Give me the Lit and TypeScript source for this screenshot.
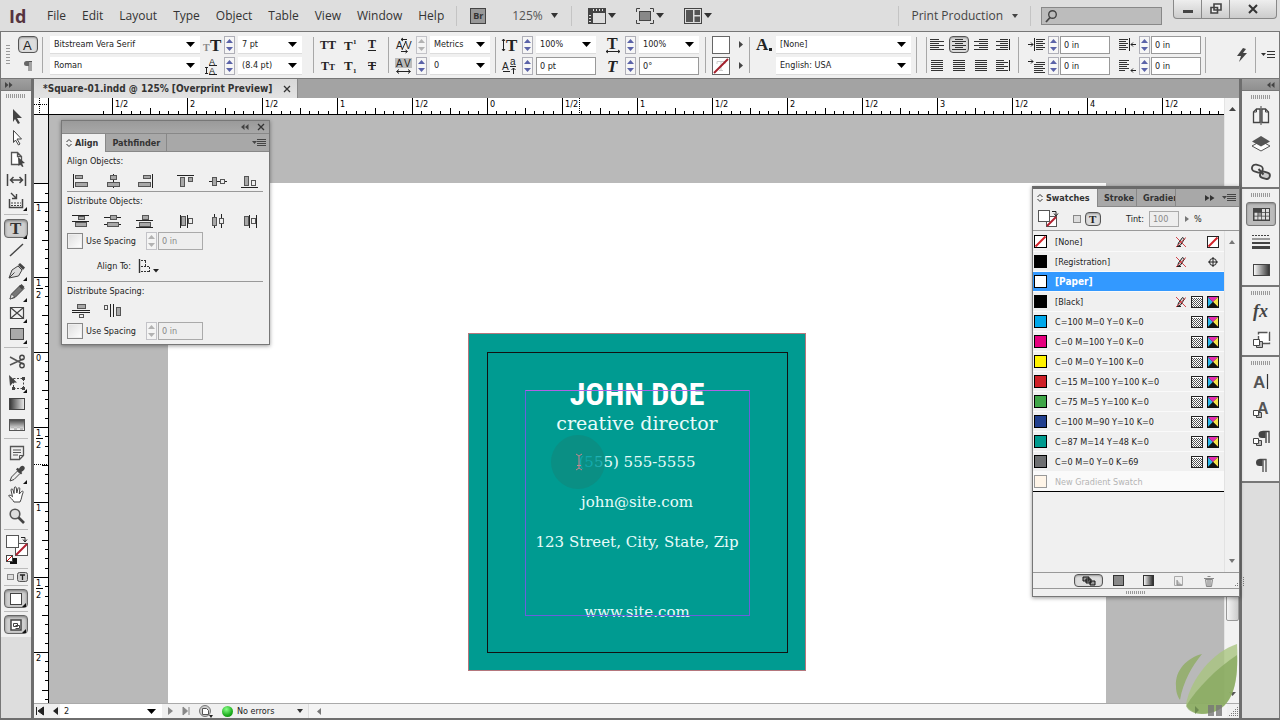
import { LitElement, html, svg, css, TemplateResult, SVGTemplateResult } from "lit";
import { customElement, state } from "lit/decorators.js";
import { classMap } from "lit/directives/class-map.js";
import { styleMap } from "lit/directives/style-map.js";

type Art = SVGTemplateResult | SVGTemplateResult[];

const icon = (w: number, h: number, art: Art): TemplateResult =>
  html`<svg width=${w} height=${h} viewBox="0 0 ${w} ${h}" aria-hidden="true">${art}</svg>`;

const lines = (rows: number[][], color = "#333"): SVGTemplateResult =>
  svg`${rows.map(([x, y, w]) => svg`<rect x=${x} y=${y} width=${w} height="1" fill=${color}/>`)}`;

const box = (x: number, y: number, w: number, h: number, light = false): SVGTemplateResult =>
  svg`<rect x=${x + 0.5} y=${y + 0.5} width=${w - 1} height=${h - 1} fill=${light ? "#eee" : "#a8a8a8"} stroke="#555"/>`;

const bar = (x: number, y: number, w: number, h: number): SVGTemplateResult =>
  svg`<rect x=${x} y=${y} width=${w} height=${h} fill="#222"/>`;

const glyph = (x: number, y: number, size: number, text: string, style = "", color = "#222"): SVGTemplateResult =>
  svg`<text x=${x} y=${y} font-size=${size} font-family="Liberation Serif, serif" font-weight="bold" fill=${color} font-style=${style || "normal"}>${text}</text>`;

const sans = (x: number, y: number, size: number, text: string, weight = "normal"): SVGTemplateResult =>
  svg`<text x=${x} y=${y} font-size=${size} font-family="Liberation Sans, sans-serif" font-weight=${weight} fill="#222">${text}</text>`;

const corner = svg`<path d="M21 21h-4l4-4z" fill="#111"/>`;

/* ---------- tool box ---------- */

const TOOLS: { name: string; art: Art; more?: boolean; on?: boolean }[][] = [
  [
    { name: "Selection Tool", art: svg`<path d="M7 3l9 9h-5l3 5-2 1-3-5-2 3z" fill="#444"/>` },
    { name: "Direct Selection Tool", art: svg`<path d="M7.500 3.500l8 8.500h-4.500l3 5-1.500 1-3-5-2 2.500z" fill="#fff" stroke="#444"/>` },
    { name: "Page Tool", art: svg`<path d="M5.500 4.500h6l4 4v8h-10z M11.500 4.500v4h4" fill="#fff" stroke="#555" stroke-width="1.300"/><path d="M12 9l7 6-3 .5 1.500 3-1.500.5-1.500-3-2 2z" fill="#444"/>` },
    { name: "Gap Tool", art: svg`<path d="M1.500 5v12M19.500 5v12M5 11h11M7.500 8L4.500 11l3 3M13.500 8l3 3-3 3" fill="none" stroke="#444" stroke-width="1.500"/>` },
    { name: "Content Collector Tool", more: true, art: svg`<path d="M3.500 9v8.500h13V9" fill="none" stroke="#444" stroke-width="1.500"/><path d="M5 13h10M5 15.500h10" stroke="#444" stroke-dasharray="2 1"/><path d="M5 3l5 5M10.500 4v4.500H6" fill="none" stroke="#444" stroke-width="1.400"/>` },
  ],
  [
    { name: "Type Tool", more: true, on: true, art: svg`<text x="4" y="16" font-size="17" font-family="Liberation Serif, serif" font-weight="bold" fill="#333">T</text>` },
    { name: "Line Tool", art: svg`<path d="M4 17L17 5" stroke="#444" stroke-width="1.400"/>` },
    { name: "Pen Tool", more: true, art: svg`<path d="M3 18l3-8 6-4 4 4-3.500 6z" fill="#ddd" stroke="#444"/><path d="M3 18l5.500-5.500" stroke="#444"/><path d="M12 5l2-2 5 4.500-2 2.500z" fill="#444"/>` },
    { name: "Pencil Tool", more: true, art: svg`<path d="M4 18l1.500-5 9-9 3.500 3.500-9 9z" fill="#777" stroke="#444"/><path d="M4 18l1.500-5 3 3z" fill="#eee" stroke="#444" stroke-width=".7"/><path d="M13 5.500l3 3L18.500 6l-3-3z" fill="#444"/>` },
    { name: "Rectangle Frame Tool", more: true, art: svg`<path d="M4.500 5.500h13v11h-13zM4.500 5.500l13 11M17.500 5.500l-13 11" fill="none" stroke="#444" stroke-width="1.200"/>` },
    { name: "Rectangle Tool", more: true, art: svg`<rect x="4.500" y="5.500" width="13" height="11" fill="#aaa" stroke="#444"/>` },
  ],
  [
    { name: "Scissors Tool", art: svg`<path d="M4 6l13 7M4 14l13-6" stroke="#555" stroke-width="1.500"/><circle cx="16" cy="6.500" r="2.200" fill="none" stroke="#444" stroke-width="1.400"/><circle cx="16" cy="14.500" r="2.200" fill="none" stroke="#444" stroke-width="1.400"/>` },
    { name: "Free Transform Tool", more: true, art: svg`<path d="M3 3l8 7.500-4 .2L4 14z" fill="#444"/><rect x="7.500" y="6.500" width="10" height="10" fill="none" stroke="#444" stroke-dasharray="2 1.500"/><path d="M16 5h3v3h-3zM16 15h3v3h-3zM6 15h3v3H6z" fill="#444"/>` },
    { name: "Gradient Swatch Tool", art: svg`<defs><linearGradient id="gh"><stop offset="0" stop-color="#333"/><stop offset="1" stop-color="#eee"/></linearGradient></defs><rect x="3.500" y="5.500" width="15" height="11" fill="url(#gh)" stroke="#444"/>` },
    { name: "Gradient Feather Tool", art: svg`<defs><linearGradient id="gv" x2="0" y2="1"><stop offset="0" stop-color="#444"/><stop offset="1" stop-color="#fff"/></linearGradient></defs><rect x="3.500" y="5.500" width="15" height="11" fill="url(#gv)" stroke="#555"/><path d="M5 12h3v2H5zM11 12h3v2h-3zM8 14h3v2H8zM14 14h3v2h-3z" fill="#bbb"/>` },
  ],
  [
    { name: "Note Tool", art: svg`<path d="M4.500 4.500h13v9l-4 4h-9z" fill="#eee" stroke="#555" stroke-width="1.300"/><path d="M17 13.500h-3.500V17M7 8h8M7 10.500h8M7 13h5" fill="none" stroke="#555"/>` },
    { name: "Eyedropper Tool", more: true, art: svg`<path d="M4 18l1.500-4 6-6 2.500 2.500-6 6z" fill="#eee" stroke="#444"/><path d="M10 6.500l5 5 1.300-1.500-1-1C19 7 19.500 5 18 3.500S14.500 3 13 5.800l-1.500-1z" fill="#444"/>` },
    { name: "Hand Tool", art: svg`<path d="M8 18c-1-2-4-5-5.500-6 .5-1.500 2.500-1 4 .8L5 6c0-1.400 1.700-1.500 2 0l1 3.500L8.300 4c.1-1.500 2-1.500 2 0l.5 5 1.200-4.500c.5-1.400 2-1 1.800.3L13.300 10l2.200-2.500c1-1 2.200 0 1.500 1.200C15.500 12 16 14 14 18z" fill="#fff" stroke="#444"/>` },
    { name: "Zoom Tool", art: svg`<circle cx="9" cy="9" r="4.800" fill="#ddd" stroke="#555" stroke-width="1.600"/><path d="M12.500 12.500l5.500 5.500" stroke="#444" stroke-width="2.600"/>` },
  ],
];

/* ---------- dock ---------- */

const DOCK: { name: string; art: Art; on?: boolean }[][] = [
  [
    { name: "Pages", art: svg`<path d="M3.500 7l3-3h3.500v13.500H3.500zM12 4h3.500l3 3v10.500H12z" fill="#f4f4f4" stroke="#444" stroke-width="1.300"/><path d="M11 1v19" stroke="#444"/><path d="M6.500 4v3h-3M15.500 4v3h3" fill="none" stroke="#444"/>` },
    { name: "Layers", art: svg`<path d="M2 13l9-5 9 5-9 5z" fill="#fff" stroke="#555"/><path d="M2 8.500l9-5.500 9 5.500-9 5z" fill="#555"/>` },
    { name: "Links", art: svg`<rect x="2" y="4" width="11" height="7" rx="3.500" fill="#eee" stroke="#444" stroke-width="1.800" transform="rotate(15 7 7)"/><rect x="10" y="11" width="10" height="6.500" rx="3.200" fill="#ccc" stroke="#444" stroke-width="1.800" transform="rotate(15 15 14)"/><path d="M8.500 8l5 5.500" stroke="#444" stroke-width="2"/>` },
  ],
  [
    { name: "Swatches", on: true, art: svg`<rect x="3" y="5" width="17" height="13" fill="#444"/><path d="M4.500 9.800h3v3h-3zM12 6h3v3h-3zM16 6h3v3h-3zM12 9.800h3v3h-3zM16 9.800h3v3h-3zM4.500 13.500h3v3h-3zM8.300 13.500h3v3h-3zM12 13.500h3v3h-3zM16 13.500h3v3h-3z" fill="#ddd"/><path d="M8.300 9.800h3v3h-3z" fill="#999"/>` },
    { name: "Stroke", art: svg`<path d="M2 4.500h18" stroke="#444" stroke-dasharray="2 1"/><path d="M2 8h18" stroke="#444"/><path d="M2 12h18" stroke="#444" stroke-width="2"/><path d="M2 16.500h18" stroke="#444" stroke-width="3"/>` },
    { name: "Gradient", art: svg`<defs><linearGradient id="dg"><stop offset="0" stop-color="#fff"/><stop offset="1" stop-color="#333"/></linearGradient></defs><rect x="3.500" y="5.500" width="16" height="11" fill="url(#dg)" stroke="#444"/>` },
  ],
  [
    { name: "Effects", art: svg`<text x="3" y="16" font-size="18" font-family="Liberation Serif, serif" font-style="italic" font-weight="bold" fill="#444">fx</text>` },
    { name: "Object Styles", art: svg`<path d="M8.500 3.500h11v11h-11z" fill="#fff" stroke="#555" stroke-dasharray="9 1.500" stroke-width="1.400"/><path d="M6.500 12.500h6v6h-6z" fill="#bbb" stroke="#444"/><path d="M3.500 10.500h6v6h-6z" fill="#fff" stroke="#444"/>` },
  ],
  [
    { name: "Character", art: svg`<text x="3" y="17" font-size="17" font-family="Liberation Sans, sans-serif" font-weight="bold" fill="#555">A</text><path d="M17.500 3v15" stroke="#333" stroke-width="1.200"/>` },
    { name: "Character Styles", art: svg`<text x="7" y="15" font-size="16" font-family="Liberation Sans, sans-serif" font-weight="bold" fill="#555">A</text><path d="M6.500 13.500h5v5h-5z" fill="#bbb" stroke="#444"/><path d="M3.500 11.500h5v5h-5z" fill="#fff" stroke="#444"/>` },
    { name: "Paragraph Styles", art: svg`<path d="M19 4v12M16 4v12M19.500 4.500h-7" stroke="#444" stroke-width="1.400"/><path d="M15.500 4H12a3.500 3.500 0 000 7h3.500z" fill="#444"/><path d="M6.500 13.500h5v5h-5z" fill="#bbb" stroke="#444"/><path d="M3.500 11.500h5v5h-5z" fill="#fff" stroke="#444"/>` },
    { name: "Paragraph", art: svg`<path d="M16 4v13M13 4v13M16.500 4.500h-7" stroke="#555" stroke-width="1.400"/><path d="M12.500 4H9.500a3.500 3.500 0 000 7h3z" fill="#444"/>` },
  ],
];

/* ---------- align panel ---------- */

const ALIGN: [string, Art][] = [
  ["Align left edges", svg`${bar(1, 2, 1, 14)}${box(3, 3, 8, 4)}${box(3, 10, 13, 5)}`],
  ["Align horizontal centers", svg`${bar(9, 2, 1, 14)}${box(6, 3, 7, 5)}${box(3, 10, 13, 5)}`],
  ["Align right edges", svg`${bar(16, 2, 1, 14)}${box(7, 3, 8, 4)}${box(2, 10, 13, 5)}`],
  ["Align top edges", svg`${bar(0, 3, 17, 1)}${box(3, 5, 5, 10)}${box(11, 5, 5, 5)}`],
  ["Align vertical centers", svg`${bar(0, 9, 18, 1)}${box(3, 5, 5, 9)}${box(11, 7, 5, 5, true)}`],
  ["Align bottom edges", svg`${bar(0, 15, 17, 1)}${box(3, 4, 5, 10)}${box(10, 8, 5, 6, true)}`],
];
const DISTRIBUTE: [string, Art][] = [
  ["Distribute top edges", svg`${bar(0, 3, 17, 1)}${bar(0, 9, 17, 1)}${box(6, 4, 7, 4)}${box(3, 10, 12, 5)}`],
  ["Distribute vertical centers", svg`${bar(0, 5, 17, 1)}${bar(0, 12, 17, 1)}${box(6, 3, 7, 5)}${box(3, 10, 12, 5)}`],
  ["Distribute bottom edges", svg`${bar(0, 8, 17, 1)}${bar(0, 15, 17, 1)}${box(6, 3, 7, 5)}${box(3, 10, 12, 5)}`],
  ["Distribute left edges", svg`${bar(3, 3, 1, 13)}${bar(10, 3, 1, 13)}${box(4, 4, 5, 10)}${box(11, 6, 5, 6, true)}`],
  ["Distribute horizontal centers", svg`${bar(5, 2, 1, 14)}${bar(12, 2, 1, 14)}${box(3, 5, 5, 9)}${box(10, 6, 5, 6, true)}`],
  ["Distribute right edges", svg`${bar(8, 3, 1, 13)}${bar(15, 3, 1, 13)}${box(3, 4, 5, 10)}${box(10, 6, 5, 6, true)}`],
];
const SPACING: [string, Art][] = [
  ["Distribute vertical space", svg`${bar(0, 8, 18, 1)}${bar(0, 10, 18, 1)}${box(5, 2, 9, 5)}${box(7, 12, 5, 4, true)}`],
  ["Distribute horizontal space", svg`${bar(6, 2, 1, 13)}${bar(9, 2, 1, 13)}${box(0, 3, 4, 5, true)}${box(12, 5, 5, 9)}`],
];

/* ---------- swatches ---------- */

interface Swatch { name: string; color: string; kind: "none" | "registration" | "paper" | "locked" | "process" | "new" }
const SWATCHES: Swatch[] = [
  { name: "[None]", color: "#fff", kind: "none" },
  { name: "[Registration]", color: "#000", kind: "registration" },
  { name: "[Paper]", color: "#fff", kind: "paper" },
  { name: "[Black]", color: "#000", kind: "locked" },
  { name: "C=100 M=0 Y=0 K=0", color: "#00a8ea", kind: "process" },
  { name: "C=0 M=100 Y=0 K=0", color: "#e6007e", kind: "process" },
  { name: "C=0 M=0 Y=100 K=0", color: "#fff200", kind: "process" },
  { name: "C=15 M=100 Y=100 K=0", color: "#cf2027", kind: "process" },
  { name: "C=75 M=5 Y=100 K=0", color: "#3fa648", kind: "process" },
  { name: "C=100 M=90 Y=10 K=0", color: "#22408f", kind: "process" },
  { name: "C=87 M=14 Y=48 K=0", color: "#009b8f", kind: "process" },
  { name: "C=0 M=0 Y=0 K=69", color: "#6d6e70", kind: "process" },
  { name: "New Gradient Swatch", color: "#fff5e8", kind: "new" },
];

const noEdit = icon(12, 12, svg`<path d="M2.500 10.500l1-3.500 4-5.500 2 1.500-4 6zM2 10.500h4" fill="#ddd" stroke="#222"/><path d="M1 1l10 10M11 1.500L1 11" stroke="#d0444a"/>`);
const process = icon(12, 12, svg`<rect x=".5" y=".5" width="11" height="11" fill="#fff" stroke="#222"/><path d="M1 2.500h10M1 4.500h10M1 6.500h10M1 8.500h10M1 10.500h10" stroke="#555" stroke-dasharray="1 1"/><path d="M2 3.500h9M2 5.500h9M2 7.500h9M2 9.500h9" stroke="#555" stroke-dasharray="1 1"/>`);
const cmyk = icon(12, 12, svg`<rect width="12" height="12" fill="#111"/><path d="M1 1l5 5-5 5z" fill="#29b6e8"/><path d="M1 1h10L6 6z" fill="#e22bb0"/><path d="M11 1v10L6 6z" fill="#f3e24a"/><path d="M1 11h10L6 6z" fill="#111"/>`);
const noneBox = icon(12, 12, svg`<rect x=".5" y=".5" width="11" height="11" fill="#fff" stroke="#222"/><path d="M1.500 10.500l9-9" stroke="#d2232a" stroke-width="2"/>`);
const target = icon(12, 12, svg`<circle cx="6" cy="6" r="3.500" fill="none" stroke="#222"/><path d="M6 1v10M1 6h10" stroke="#222"/>`);

/* ---------- rulers ---------- */

const STEP = 9.375;
const HALF_INCH = 75;
const tickLen = (i: number) => (i % 8 === 0 ? 17 : i % 4 === 0 ? 7 : 4);
const range = (a: number, b: number) => Array.from({ length: Math.max(0, b - a + 1) }, (_, k) => a + k);

@customElement("app-root")
export class AppRoot extends LitElement {
  @state() private selected = "[Paper]";
  @state() private viewWidth = window.innerWidth - 105;
  @state() private viewHeight = window.innerHeight - 131;

  private onResize = () => {
    this.viewWidth = window.innerWidth - 105;
    this.viewHeight = window.innerHeight - 131;
  };

  connectedCallback() {
    super.connectedCallback();
    window.addEventListener("resize", this.onResize);
  }

  disconnectedCallback() {
    window.removeEventListener("resize", this.onResize);
    super.disconnectedCallback();
  }

  static styles = css`
    :host {
      display: block;
      height: 100vh;
      font: 9px/12px "DejaVu Sans Condensed", "DejaVu Sans", sans-serif;
      color: #222;
    }
    * { box-sizing: border-box; }
    svg { display: block; flex: none; overflow: visible; }
    button, input, select { font: inherit; color: inherit; margin: 0; padding: 0; border: 0; background: none; border-radius: 0; }
    button { display: flex; align-items: center; justify-content: center; flex: none; }
    .app { display: flex; flex-direction: column; height: 100%; background: #ddd; overflow: hidden; border-bottom: 2px solid #6e6e6e; }

    .menubar { display: flex; align-items: center; height: 31px; flex: none; background: #dedede; font: 12px/16px "Open Sans", "Noto Sans", sans-serif; color: #333; }
    .logo { width: 47px; padding-left: 9px; font: bold 18px/24px "Open Sans", sans-serif; color: #55333f; flex: none; }
    .menus { display: flex; gap: 16px; list-style: none; margin: 0; padding: 0; }
    .menus a { color: inherit; text-decoration: none; }
    .rule { width: 1px; height: 20px; background: #c4c4c4; flex: none; }
    .rule.first { margin: 0 13px 0 12px; }
    .br { width: 16px; height: 16px; border: 1px solid #444; background: #999; font: bold 9px/12px "Open Sans", sans-serif; color: #333; }
    .zoom { margin: 0 17px 0 26px; display: flex; gap: 8px; align-items: center; justify-content: flex-start; width: 42px; color: #555; }
    .views { display: flex; gap: 20px; margin-left: 16px; }
    .views button { gap: 2px; }
    .push { flex: 1; }
    .workspace { display: flex; gap: 9px; margin: 0 12px; color: #444; }
    .search { display: flex; align-items: center; width: 121px; height: 18px; margin: 0 11px 0 10px; padding-left: 2px; border: 1px solid #888; background: #bcbcbc; }
    .search input { width: 100px; outline: none; }
    .window { display: flex; align-self: flex-start; height: 19px; margin-right: 3px; border: 1px solid #888; border-top: 0; border-radius: 0 0 4px 4px; background: linear-gradient(#eee, #ccc); }
    .window button { width: 28px; border-right: 1px solid #888; }
    .window button:last-child { width: 46px; border: 0; }

    .control { display: flex; align-items: center; height: 48px; flex: none; padding-left: 5px; border: 1px solid #777; background: #f0f0f0; }
    .grip { width: 4px; height: 20px; margin-right: 8px; background: repeating-linear-gradient(#999 0 1px, transparent 1px 3px); flex: none; }
    .pair { display: grid; grid-auto-flow: column; grid-template-rows: 18px 18px; row-gap: 3px; align-items: center; flex: none; }
    .pair > svg { justify-self: center; }
    .pair.g1 { column-gap: 1px; } .pair.g3 { column-gap: 3px; } .pair.g9 { column-gap: 9px; }
    .pair.fonts { margin: 0 3px 0 7px; }
    .pair.after { margin-left: 8px; }
    .sep { width: 1px; height: 36px; margin: 0 5px; background: #a8a8a8; flex: none; }
    .sep.tight { margin: 0 0 0 4px; } .sep.wide { margin: 0 4px 0 11px; } .sep.mid { margin: 0 6px; } .sep.near { margin: 0 8px 0 3px; }
    .quick { margin-right: 2px; }
    .flyout { margin-right: 4px; }
    select { appearance: none; height: 18px; padding: 0 16px 0 4px; background: #fff url('data:image/svg+xml,<svg xmlns="http://www.w3.org/2000/svg" width="9" height="5"><path d="M0 0h9l-4.500 5z"/></svg>') no-repeat right 5px center; border-bottom: 1px solid #ddd; }
    .w150 { width: 150px; } .w64 { width: 64px; } .w60 { width: 60px; } .w135 { width: 135px; } .w50 { width: 50px; } .w45 { width: 45px; }
    input.field { height: 18px; padding: 0 3px; border: 1px solid #999; background: #fff; min-width: 0; }
    input.field:disabled { background: #eee; color: #888; border-color: #aaa; }
    .spin { display: grid; width: 11px; height: 18px; border: 1px solid #b0b0b8; background: #f6f6f6; }
    .spin button { width: 9px; height: 8px; }
    .spin.off { opacity: .7; }
    .key { width: 20px; height: 17px; border-radius: 4px; }
    .key.on { border: 1px solid #555; background: #ddd; box-shadow: inset 0 1px 2px #999; }
    .caps { grid-template-columns: 22px 22px 20px; }
    .paras { grid-template-columns: repeat(4, 22px); }

    .body { display: flex; flex: 1; min-height: 0; }
    .toolbox { width: 34px; flex: none; display: flex; flex-direction: column; border-left: 1px solid #777; border-right: 3px solid #6e6e6e; background: #ddd; }
    .cap { height: 12px; flex: none; display: flex; align-items: center; padding: 0 4px; background: linear-gradient(#a0a0a0, #8f8f8f); border-bottom: 1px solid #777; }
    .tools { background: #f0f0f0; display: flex; flex-direction: column; align-items: center; padding-bottom: 3px; }
    .hgrip { width: 20px; height: 4px; margin: 4px auto; background: repeating-linear-gradient(90deg, #999 0 1px, transparent 1px 2px); flex: none; }
    .tools .hgrip { margin: 3px 0 8px; }
    .tool { width: 24px; height: 21px; }
    .tool.on, .mode { border: 1px solid #666; border-radius: 4px; background: #cfcfcf; box-shadow: inset 0 1px 3px #777; }
    .tool.on { height: 19px; margin: 1px 0; }
    .mode { width: 24px; height: 19px; }
    .line { width: 24px; height: 1px; margin: 3px 0; background: #bbb; flex: none; }

    .center { flex: 1; min-width: 0; display: flex; flex-direction: column; position: relative; border-right: 3px solid #6e6e6e; }
    .tabs { height: 19px; flex: none; background: #a3a3a3; display: flex; }
    .tab { display: flex; align-items: center; gap: 12px; padding: 0 7px 0 9px; background: linear-gradient(#d8d8d8, #e2e2e2); font-size: 10px; font-weight: bold; color: #333; border-right: 1px solid #888; }
    .view { flex: 1; min-height: 0; display: grid; grid-template: 17px minmax(0, 1fr) / 15px minmax(0, 1fr) 15px; }
    .hruler, .vruler { overflow: hidden; background: #fff; }
    .hruler { border-bottom: 1px solid #000; }
    .vruler { border-right: 1px solid #000; }
    .corner { background: #fff; }
    .vscroll { grid-column: 3; grid-row: 1 / 3; background: #f2f2f2; display: flex; flex-direction: column; align-items: center; padding: 9px 0 7px; border-left: 1px solid #e4e4e4; }
    .thumb { width: 13px; height: 26px; margin-bottom: 71px; border: 1px solid #999; border-radius: 2px; background: linear-gradient(90deg, #f4f4f4, #ccc); }
    .canvas { grid-column: 2; grid-row: 2; position: relative; overflow: hidden; background: #b9b9b9; }
    .paper { position: absolute; left: 119px; top: 68px; width: 938px; bottom: 0; background: #fff; }
    .card { position: absolute; left: 419px; top: 218px; width: 338px; height: 338px; border: 1px solid #b4777d; background: #009b91; color: #e8fbfa; font-family: "DejaVu Serif", serif; text-align: center; white-space: nowrap; isolation: isolate; }
    .margin { position: absolute; inset: 18px 17px 17px 18px; border: 1px solid #111; }
    .frame { position: absolute; left: 56px; top: 56px; width: 225px; height: 226px; border: 1px solid #6c5fdc; border-top-color: #b062e6; }
    .card p { margin: 0; font-size: 15px; line-height: 20px; }
    .card .name { padding-top: 41px; font: bold 32px/39px "Liberation Sans Narrow", "Roboto Condensed", sans-serif; color: #fff; }
    .card .role { font-size: 19px; line-height: 18px; }
    .card .phone, .card .mail, .card .street { margin-top: 20px; }
    .card .web { margin-top: 50px; }
    .halo { position: absolute; z-index: -1; left: 82px; top: 101px; width: 54px; height: 54px; border-radius: 50%; background: #0a8f84; }
    .ibeam { position: absolute; left: 106px; top: 119px; }
    .s1 { color: #12a8ac; } .s2 { color: #22b0b2; }

    .status { height: 15px; flex: none; display: flex; align-items: center; background: #f0f0f0; border-top: 1px solid #aaa; padding-left: 2px; }
    .status .pageno { width: 102px; height: 14px; border: 0; background-position: right 6px center; }
    .nav { display: flex; gap: 9px; margin-right: 2px; }
    .nav.next { gap: 10px; margin: 0 8px 0 6px; }
    .ok { width: 11px; height: 11px; border-radius: 50%; background: radial-gradient(circle at 40% 30%, #8f8, #1fae1f 60%, #0b7a0b); margin: 0 4px 0 9px; flex: none; }
    .errors { width: 60px; }
    .hscroll { flex: 1; margin-left: 5px; padding-left: 8px; height: 14px; display: flex; align-items: center; background: #f4f4f4; border-left: 1px solid #ddd; }

    .panel { position: absolute; border: 1px solid #777; background: #f0f0f0; box-shadow: 0 1px 4px #0006; }
    .align { left: 27px; top: 41px; width: 209px; }
    .bar { height: 13px; display: flex; align-items: center; justify-content: flex-end; gap: 9px; padding-right: 5px; background: linear-gradient(#9a9a9a, #a8a8a8); border-bottom: 1px solid #888; }
    .ptabs { height: 18px; display: flex; background: #a8a8a8; border-bottom: 1px solid #888; font-weight: bold; color: #333; }
    .ptabs button { font-weight: bold; padding: 0 6px; border-right: 1px solid #888; overflow: hidden; justify-content: flex-start; gap: 3px; }
    .ptabs .front { background: #f0f0f0; height: 18px; padding-left: 4px; padding-right: 7px; }
    .ptabs .tail { margin-left: auto; display: flex; align-items: center; gap: 7px; padding-right: 3px; }
    .content { padding: 0 6px 3px 5px; }
    .row { display: flex; align-items: center; height: 20px; }
    .row.icons { height: 21px; margin-left: -2px; }
    .icons button { width: 32px; height: 21px; }
    .icons button:nth-child(4) { margin-left: 9px; }
    .content hr { height: 1px; margin: 0; border: 0; background: #999; }
    .heading { height: 18px; line-height: 18px; }
    input[type="checkbox"] { appearance: none; width: 16px; height: 16px; border: 1px solid #888; background: linear-gradient(135deg, #ddd, #fff); box-shadow: inset 0 0 0 1px #eee; flex: none; }
    .row label { width: 60px; margin-left: 3px; }
    .row .spin { margin-right: 1px; }
    .row.to { height: 30px; padding-left: 30px; gap: 6px; }

    .swatches { right: -1px; top: 107px; width: 208px; border-top: 3px solid #6a6a6a; }
    .swatches .ptabs .stroke { width: 39px; } .swatches .ptabs .grad { width: 39px; padding-right: 0; }
    .swatches .ptabs .front { width: 65px; }
    .opts { height: 24px; display: flex; align-items: center; padding-left: 4px; border-bottom: 1px solid #999; }
    .opts .fmt { margin: 0 4px 0 14px; }
    .opts .key { width: 16px; height: 14px; margin-right: 25px; }
    .opts .field { width: 30px; margin: 0 6px 0 5px; height: 16px; }
    .opts .field + svg { margin-right: 5px; }
    .listwrap { display: flex; height: 341px; }
    .list { flex: 1; margin: 0; padding: 1px 0 0; list-style: none; }
    .item { width: 100%; height: 20px; padding-left: 1px; border-bottom: 1px solid #fafafa; text-align: left; display: flex; justify-content: flex-start; }
    .chip { width: 13px; height: 13px; margin-right: 8px; border: 1px solid #000; flex: none; }
    .item.sel { background: #3399ff; color: #fff; font-weight: bold; font-size: 10px; }
    .item.new { color: #b4b4b4; background: #fafafa; border-bottom: 1px solid #000; }
    .item.new .chip { border-color: #999; }
    .marks { margin-left: auto; padding-right: 5px; display: grid; grid-template-columns: 12px 12px 12px; gap: 4px; }
    .lscroll { width: 15px; display: flex; flex-direction: column; justify-content: space-between; align-items: center; padding: 9px 0; border-left: 1px solid #e2e2e2; }
    .foot { height: 17px; display: flex; align-items: center; border: 1px solid #999; border-width: 1px 0; padding-left: 41px; gap: 18px; }
    .foot .key { width: 29px; height: 13px; margin-right: -8px; }
    .foot .sizer { margin-left: auto; }
    .swatches > .hgrip { margin: 2px auto; height: 3px; }

    .dock { width: 38px; flex: none; border-right: 1px solid #777; background: #ddd; }
    .dock .cap { justify-content: flex-end; }
    .group { background: #f0f0f0; padding-bottom: 1px; border-bottom: 2px solid #777; display: flex; flex-direction: column; align-items: center; }
    .group .hgrip { margin: 4px 0 3px; }
    .group button { width: 30px; height: 24px; margin: 2px 0; }
    .group button.on { border: 1px solid #777; border-radius: 3px; background: #bbb; box-shadow: inset 0 1px 2px #888; }
    .leaf { position: absolute; right: 0; bottom: 2px; }
  `;

  private tri(dir: "up" | "down" | "left" | "right", w: number, h: number, fill = "#222") {
    const d = {
      up: `M0 ${h}h${w}L${w / 2} 0z`, down: `M0 0h${w}L${w / 2} ${h}z`,
      left: `M${w} 0v${h}L0 ${h / 2}z`, right: `M0 0v${h}L${w} ${h / 2}z`,
    }[dir];
    return icon(w, h, svg`<path d=${d} fill=${fill}/>`);
  }

  private spin(label: string, off = false) {
    const c = off ? "#999" : "#5a62a8";
    return html`<span class=${classMap({ spin: true, off })}>
      <button aria-label="Increase ${label}" ?disabled=${off}>${this.tri("up", 7, 4, c)}</button>
      <button aria-label="Decrease ${label}" ?disabled=${off}>${this.tri("down", 7, 4, c)}</button></span>`;
  }

  private pick(label: string, value: string, cls: string) {
    return html`<select class=${cls} aria-label=${label}><option>${value}</option></select>`;
  }

  private field(label: string, value: string, cls: string) {
    return html`<input class="field ${cls}" aria-label=${label} .value=${value}>`;
  }

  private key(label: string, art: TemplateResult, on = false) {
    return html`<button class=${classMap({ key: true, on })} aria-label=${label}>${art}</button>`;
  }

  private menuBar() {
    const menus = ["File", "Edit", "Layout", "Type", "Object", "Table", "View", "Window", "Help"];
    const down = this.tri("down", 8, 5, "#333");
    return html`<header class="menubar">
      <span class="logo">Id</span>
      <ul class="menus">${menus.map((m) => html`<li><a href="#">${m}</a></li>`)}</ul>
      <i class="rule first"></i>
      <button class="br">Br</button>
      <button class="zoom">125% ${this.tri("down", 7, 5, "#333")}</button>
      <i class="rule"></i>
      <div class="views">
        <button aria-label="View options">${icon(18, 16, svg`<rect x=".5" y=".5" width="17" height="15" fill="#ddd" stroke="#444"/><path d="M0 0h18v5H5v11H0z" fill="#444"/><path d="M5.500 1v2M8.500 1v2M11.500 1v2M14.500 1v2M1 7.500h2M1 10.500h2M1 13.500h2" stroke="#ddd"/>`)}${down}</button>
        <button aria-label="Screen mode">${icon(18, 16, svg`<path d="M.5 4V.5H4M14 .5h3.500V4M17.500 12v3.500H14M4 15.500H.5V12" fill="none" stroke="#444"/><rect x="3.500" y="3.500" width="11" height="9" fill="#888" stroke="#444"/>`)}${down}</button>
        <button aria-label="Arrange documents">${icon(18, 16, svg`<rect x=".5" y=".5" width="17" height="15" fill="#ddd" stroke="#444"/><path d="M2 2h7v12H2zM10.500 2H16v5h-5.500zM10.500 8.500H16V14h-5.500z" fill="#555"/>`)}${down}</button>
      </div>
      <span class="push"></span>
      <i class="rule"></i>
      <button class="workspace">Print Production ${this.tri("down", 6, 4, "#444")}</button>
      <i class="rule"></i>
      <label class="search">${icon(14, 14, svg`<circle cx="8.500" cy="5.500" r="3.800" fill="none" stroke="#444" stroke-width="1.400"/><path d="M6 8.500L2 13" stroke="#444" stroke-width="1.800"/>`)}<input aria-label="Search"></label>
      <div class="window">
        <button aria-label="Minimize">${icon(10, 10, svg`<rect y="6" width="10" height="3" fill="#444"/>`)}</button>
        <button aria-label="Restore">${icon(12, 12, svg`<path d="M4 1h7v6H4zM1 4.500h6.500V10H1z" fill="#eee" stroke="#444" stroke-width="1.600"/>`)}</button>
        <button aria-label="Close">${icon(10, 10, svg`<path d="M1 1l8 8M9 1L1 9" stroke="#333" stroke-width="2"/>`)}</button>
      </div>
    </header>`;
  }

  private controlBar() {
    const para = (rows: number[][]) => icon(15, 13, lines(rows));
    const ys = [1, 3, 5, 7, 9, 11];
    const left = ys.map((y, i) => [0, y, i % 2 ? 14 : 9]);
    const mid = ys.map((y, i) => (i % 2 ? [0, y, 14] : [3, y, 8]));
    const right = ys.map((y, i) => (i % 2 ? [0, y, 14] : [5, y, 9]));
    const full = ys.map((y) => [1, y, 12]);
    const arrow = this.tri("right", 4, 7, "#444");
    return html`<section class="control" aria-label="Control">
      <span class="grip"></span>
      <div class="pair">
        ${this.key("Character formatting", icon(12, 12, sans(1, 11, 13, "A")), true)}
        ${this.key("Paragraph formatting", icon(10, 12, svg`<path d="M8 1v10M6 1v10M9 1.500H4" stroke="#555"/><path d="M6 1H3.500a2.500 2.500 0 000 5H6z" fill="#666"/>`))}
      </div>
      <i class="sep tight"></i>
      <div class="pair fonts">${this.pick("Font family", "Bitstream Vera Serif", "w150")}${this.pick("Font style", "Roman", "w150")}</div>
      <div class="pair g3">
        ${icon(18, 16, svg`${glyph(0, 14, 10, "T", "", "#888")}${glyph(7, 14, 17, "T")}`)}${icon(18, 18, svg`${sans(6, 8, 9, "A")}${sans(6, 17, 9, "A")}<path d="M3.500 10v7M2 10.500h3M2 16.500h3M6 8.500h8M6 17.500h8" stroke="#222"/>`)}
        ${this.spin("font size")}${this.spin("leading")}
        ${this.pick("Font size", "7 pt", "w64")}${this.pick("Leading", "(8.4 pt)", "w64")}
      </div>
      <i class="sep wide"></i>
      <div class="pair caps">
        ${this.key("All caps", icon(18, 14, glyph(1, 11, 12, "TT")))}${this.key("Small caps", icon(16, 14, svg`${glyph(1, 11, 12, "T")}${glyph(9, 11, 9, "T")}`))}
        ${this.key("Superscript", icon(14, 14, svg`${glyph(1, 12, 13, "T")}${glyph(10, 6, 7, "1")}`))}${this.key("Subscript", icon(14, 14, svg`${glyph(1, 11, 13, "T")}${glyph(10, 14, 7, "1")}`))}
        ${this.key("Underline", icon(10, 14, svg`${glyph(1, 10, 12, "T")}${bar(1, 12, 8, 1)}`))}${this.key("Strikethrough", icon(10, 14, svg`${glyph(1, 11, 12, "T")}${bar(1, 6, 8, 1)}`))}
      </div>
      <i class="sep mid"></i>
      <div class="pair g3">
        ${icon(18, 16, svg`${sans(1, 12, 10, "A")}${sans(10, 12, 10, "V")}<path d="M6 2.500h6M8 1L6 2.500 8 4M6 14.500h6M10.500 13l2 1.500-2 1.500M11 4L7 13" stroke="#222" fill="none"/>`)}${icon(18, 16, svg`<rect width="17" height="10" fill="#bbb"/>${sans(1, 9, 10, "A")}${sans(9, 9, 10, "V")}<path d="M2 13.500h13M4 11.500l-2.500 2 2.500 2M13 11.500l2.500 2-2.500 2" stroke="#222" fill="none"/>`)}
        ${this.spin("kerning", true)}${this.spin("tracking")}
        ${this.pick("Kerning", "Metrics", "w60")}${this.pick("Tracking", "0", "w60")}
      </div>
      <i class="sep"></i>
      <div class="pair g3">
        ${icon(18, 16, svg`${glyph(5, 14, 17, "T")}<path d="M2.500 2v12M1 4l1.500-2L4 4M1 12l1.500 2L4 12" stroke="#222" fill="none"/>`)}${icon(16, 16, svg`${sans(0, 12, 10, "A")}${sans(8, 7, 10, "a")}<path d="M1 13.500h7M8 8.500h6M11.500 10v6M9.500 12l2-2 2 2" stroke="#222" fill="none"/>`)}
        ${this.spin("vertical scale")}${this.spin("baseline shift")}
        ${this.pick("Vertical scale", "100%", "w60")}${this.field("Baseline shift", "0 pt", "w60")}
      </div>
      <div class="pair g3 after">
        ${icon(18, 16, svg`${glyph(3, 12, 16, "T")}<path d="M2 14.500h14M4 13l-2 1.500L4 16M14 13l2 1.500-2 1.500" stroke="#222" fill="none"/>`)}${icon(18, 16, glyph(3, 14, 17, "T", "italic"))}
        ${this.spin("horizontal scale")}${this.spin("skew")}
        ${this.pick("Horizontal scale", "100%", "w60")}${this.field("Skew", "0°", "w60")}
      </div>
      <i class="sep mid"></i>
      <div class="pair g9">
        ${icon(18, 18, svg`<rect x=".5" y=".5" width="17" height="17" fill="#fff" stroke="#666"/>`)}${icon(18, 18, svg`<rect x=".5" y=".5" width="17" height="17" fill="#fff" stroke="#666"/><path d="M5 7V4.500h8V7M9 5v8M7 13.500h4" stroke="#ccc" fill="none"/><path d="M2 16L16 2" stroke="#a3202c" stroke-width="2"/>`)}
        ${arrow}${arrow}
      </div>
      <i class="sep mid"></i>
      <div class="pair g3">
        ${icon(17, 16, svg`${glyph(0, 13, 17, "A")}<rect x="13" y="11" width="3" height="3" fill="#222"/>`)}<span></span>
        ${this.pick("Character style", "[None]", "w135")}${this.pick("Language", "English: USA", "w135")}
      </div>
      <i class="sep"></i><i class="sep tight"></i><i></i>
      <div class="pair paras">
        ${this.key("Align left", para(left))}${this.key("Justify, last left", para(full))}
        ${this.key("Align center", para(mid), true)}${this.key("Justify, last centered", para(full))}
        ${this.key("Align right", para(right))}${this.key("Justify all", para(full))}
        ${this.key("Align towards spine", icon(15, 13, svg`${lines(ys.map((y, i) => (i % 2 ? [0, y, 12] : [4, y, 8])))}${bar(13, 1, 1, 11)}`))}
        ${this.key("Align away from spine", icon(15, 13, svg`${lines(ys.map((y, i) => (i % 2 ? [0, y, 12] : [0, y, 8])))}${bar(13, 1, 1, 11)}`))}
      </div>
      <i class="sep near"></i>
      <div class="pair g1">
        ${icon(20, 14, svg`${lines([[9, 1, 9], [9, 3, 7], [9, 5, 9], [9, 7, 7], [9, 9, 9], [9, 11, 7]])}${bar(7, 0, 1, 13)}<path d="M1 6.500h5M4 4.500l2 2-2 2" stroke="#222" fill="none"/>`)}${icon(20, 14, svg`${lines([[9, 3, 9], [7, 5, 11], [7, 7, 9], [7, 9, 11], [7, 11, 9], [7, 13, 11]])}<path d="M1 2.500h5M4 .5l2 2-2 2" stroke="#222" fill="none"/>`)}
        ${this.spin("left indent")}${this.spin("first line indent")}
        ${this.field("Left indent", "0 in", "w50")}${this.field("First line indent", "0 in", "w50")}
      </div>
      <div class="pair g1 after">
        ${icon(20, 14, svg`${lines([[1, 1, 9], [1, 3, 7], [1, 5, 9], [1, 7, 7], [1, 9, 9], [1, 11, 7]])}${bar(11, 0, 1, 13)}<path d="M18 6.500h-5M15 4.500l-2 2 2 2" stroke="#222" fill="none"/>`)}${icon(20, 14, svg`${lines([[1, 1, 10], [1, 3, 8], [1, 5, 10], [1, 7, 8], [1, 9, 10], [1, 11, 6]])}<path d="M18 11.500h-5M15 9.500l-2 2 2 2" stroke="#222" fill="none"/>`)}
        ${this.spin("right indent")}${this.spin("last line indent")}
        ${this.field("Right indent", "0 in", "w50")}${this.field("Last line indent", "0 in", "w50")}
      </div>
      <i class="sep tight"></i>
      <span class="push"></span>
      <button class="quick" aria-label="Quick Apply">${icon(12, 16, svg`<path d="M7 1L1 9h4l-2 6 8-9H7l3-4z" fill="#444"/>`)}</button>
      <i class="sep"></i>
      <button class="flyout" aria-label="Panel menu">${icon(14, 10, svg`<path d="M0 3h5L2.500 6z" fill="#333"/>${lines([[6, 1, 8], [6, 4, 8], [6, 7, 8]])}`)}</button>
    </section>`;
  }

  private toolBox() {
    return html`<aside class="toolbox" aria-label="Tools">
      <div class="cap">${icon(8, 6, svg`<path d="M0 0l3.500 3L0 6zM4 0l3.500 3L4 6z" fill="#444"/>`)}</div>
      <div class="tools">
        <span class="hgrip"></span>
        ${TOOLS.map((g) => html`${g.map((t) => html`<button class=${classMap({ tool: true, on: !!t.on })} aria-label=${t.name}>
          ${icon(21, 21, svg`${t.art}${t.more ? corner : ""}`)}</button>`)}<i class="line"></i>`)}
        ${icon(24, 32, svg`<rect x="11.500" y="10.500" width="12" height="12" fill="#fff" stroke="#555"/><path d="M12 22L23 11" stroke="#b02030" stroke-width="2"/><rect x="2.500" y="2.500" width="12" height="12" fill="#fff" stroke="#555"/><path d="M17 4.500h4V8M19 6.500L21 9l2-2.500" fill="none" stroke="#222"/><rect x="6" y="25" width="7" height="6" fill="#111"/><rect x="2.500" y="22.500" width="6" height="6" fill="#fff" stroke="#444"/><path d="M3 28l5-5" stroke="#c00"/>`)}
        <i class="line"></i>
        ${icon(26, 10, svg`<rect x="4.500" y="2.500" width="6" height="5" fill="#ddd" stroke="#888"/><rect x="14.500" y=".5" width="10" height="9" rx="2" fill="#ccc" stroke="#555"/><path d="M17 3h5M19.500 3v5" stroke="#222" stroke-width="1.300"/>`)}
        <i class="line"></i>
        <button class="mode" aria-label="Normal view">${icon(20, 16, svg`<rect x="4.500" y="2.500" width="11" height="11" fill="#fff" stroke="#444"/><path d="M20 16h-4l4-4z" fill="#111"/>`)}</button>
        <i class="line"></i>
        <button class="mode" aria-label="Screen mode">${icon(20, 16, svg`<rect x="5" y="3" width="10" height="10" fill="#fff" stroke="#444" stroke-width="1.500"/><path d="M7.500 6.500h4v3h-4zM9.500 8.500h4v3h-4" fill="none" stroke="#444"/><path d="M20 16h-4l4-4z" fill="#111"/>`)}</button>
      </div>
    </aside>`;
  }

  private horizontalRuler() {
    const origin = 438;
    const right = this.viewWidth - origin;
    return html`<svg width=${this.viewWidth} height="17">
      ${range(-41, Math.floor(right / STEP)).map((i) => {
        const x = Math.round(origin + i * STEP);
        return svg`<rect x=${x} y=${17 - tickLen(i)} width="1" height="17"/>`;
      })}
      ${range(-5, Math.floor((right - 22) / HALF_INCH)).map((k) => svg`<text x=${Math.round(origin + k * HALF_INCH) + 3} y="9">${k % 2 ? "1/2" : Math.abs(k / 2)}</text>`)}
      <path d="M530.500 0v17" stroke="#000" stroke-dasharray="1 1"/>
    </svg>`;
  }

  private verticalRuler() {
    const origin = 237;
    const below = this.viewHeight - origin;
    return html`<svg width="15" height=${this.viewHeight}>
      <rect width="15" height="68" fill="#eee"/><rect y="68" width="15" height="1"/>
      ${range(-17, Math.floor(below / STEP)).map((i) => {
        const y = Math.round(origin + i * STEP);
        return svg`<rect x=${15 - tickLen(i)} y=${y} width="17" height="1"/>`;
      })}
      ${range(-2, Math.floor((below - 24) / HALF_INCH)).map((k) => {
        const y = origin + k * HALF_INCH;
        return k % 2
          ? svg`<text x="2" y=${y + 9}>1</text><rect x="2" y=${y + 11} width="7" height="1"/><text x="2" y=${y + 21}>2</text>`
          : svg`<text x="2" y=${y + 9}>${Math.abs(k / 2)}</text>`;
      })}
      <path d="M0 349.500h15" stroke="#000" stroke-dasharray="1 1"/>
    </svg>`;
  }

  private alignPanel() {
    const set = (items: [string, Art][]) => html`<div class="row icons">${items.map(([n, a]) => html`<button aria-label=${n}>${icon(18, 18, a)}</button>`)}</div>`;
    const use = (id: string) => html`<div class="row"><input type="checkbox" id=${id}><label for=${id}>Use Spacing</label>${this.spin("spacing", true)}<input class="field w45" aria-label="Spacing" value="0 in" disabled></div>`;
    return html`<section class="panel align" aria-label="Align">
      <div class="bar">${icon(8, 6, svg`<path d="M3.500 0L0 3l3.500 3zM7.500 0L4 3l3.500 3z" fill="#444"/>`)}${icon(6, 6, svg`<path d="M0 0l6 6M6 0L0 6" stroke="#333" stroke-width="1.300"/>`)}</div>
      <div class="ptabs">
        <button class="front">${this.diamond()}Align</button><button>Pathfinder</button>
        <span class="tail">${this.flyout()}</span>
      </div>
      <div class="content">
        <div class="heading">Align Objects:</div>
        ${set(ALIGN)}<hr>
        <div class="heading">Distribute Objects:</div>
        ${set(DISTRIBUTE)}
        ${use("use-a")}
        <div class="row to">Align To: ${icon(22, 16, svg`<path d="M2.500 1v14" stroke="#333" stroke-width="1.400"/><path d="M4 2.500h5M8.500 3v5M4 8.500h9M12.500 9v5M4 13.500h9" stroke="#333" stroke-dasharray="2 1" fill="none"/><path d="M16 11h6l-3 3.500z" fill="#222"/>`)}</div>
        <hr>
        <div class="heading">Distribute Spacing:</div>
        ${set(SPACING)}
        ${use("use-b")}
      </div>
    </section>`;
  }

  private diamond() {
    return icon(6, 8, svg`<path d="M.5 3L3 .5 5.500 3M.5 5L3 7.500 5.500 5" fill="none" stroke="#333"/>`);
  }

  private flyout() {
    return icon(14, 8, svg`<path d="M0 2h5L2.500 5z" fill="#444"/>${lines([[5, 0, 9], [5, 2, 9], [5, 4, 9], [5, 6, 9]], "#444")}`);
  }

  private swatchRow(s: Swatch) {
    const locked = s.kind === "none" || s.kind === "registration" || s.kind === "locked";
    const type = s.kind === "process" || s.kind === "locked";
    return html`<li><button class=${classMap({ item: true, sel: s.name === this.selected, new: s.kind === "new" })} @click=${() => (this.selected = s.name)}>
      ${s.kind === "none"
        ? icon(21, 13, svg`<rect x=".5" y=".5" width="12" height="12" fill="#fff" stroke="#000"/><path d="M1.500 11.500l10-10" stroke="#d2232a" stroke-width="2"/>`)
        : html`<span class="chip" style=${styleMap({ background: s.color })}></span>`}${s.name}
      <span class="marks">${locked ? noEdit : html`<i></i>`}${type ? process : html`<i></i>`}${type ? cmyk : s.kind === "none" ? noneBox : s.kind === "registration" ? target : html`<i></i>`}</span>
    </button></li>`;
  }

  private swatchPanel() {
    return html`<section class="panel swatches" aria-label="Swatches">
      <div class="ptabs">
        <button class="front">${this.diamond()}Swatches</button><button class="stroke">Stroke</button><button class="grad">Gradient</button>
        <span class="tail">${icon(10, 6, svg`<path d="M0 0l4.500 3L0 6zM5 0l4.500 3L5 6z" fill="#333"/>`)}${this.flyout()}</span>
      </div>
      <div class="opts">
        ${icon(22, 20, svg`<rect x="9.500" y="7.500" width="10" height="10" fill="#fff" stroke="#555"/><path d="M10 17l9-9" stroke="#b02030" stroke-width="2"/><rect x="1.500" y="1.500" width="11" height="11" fill="#fff" stroke="#555"/><path d="M15 2.500h4V6M17 4.500L19 7l2-2.500" fill="none" stroke="#222"/>`)}
        <span class="fmt">${icon(8, 8, svg`<rect x=".5" y=".5" width="7" height="7" fill="#ddd" stroke="#888"/>`)}</span>
        ${this.key("Formatting affects text", icon(10, 10, glyph(1, 9, 11, "T")), true)}
        <label for="tint">Tint:</label><input class="field" id="tint" value="100" disabled>${this.tri("right", 4, 6, "#777")}%
      </div>
      <div class="listwrap">
        <ul class="list">${SWATCHES.map((s) => this.swatchRow(s))}</ul>
        <div class="lscroll">${this.tri("up", 6, 4, "#777")}${this.tri("down", 6, 4, "#777")}</div>
      </div>
      <div class="foot">
        ${this.key("Show all swatches", icon(14, 10, svg`<path d="M1 1h6v4H1zM4 3h5v4H4zM8 5h5v4H8z" fill="#999" stroke="#111"/>`), true)}
        ${icon(12, 12, svg`<rect x=".5" y=".5" width="10" height="10" fill="#888" stroke="#333"/>`)}
        ${icon(12, 12, svg`<defs><linearGradient id="dg2"><stop offset="0" stop-color="#fff"/><stop offset="1" stop-color="#222"/></linearGradient></defs><rect x=".5" y=".5" width="10" height="10" fill="url(#dg2)" stroke="#333"/>`)}
        ${icon(12, 12, svg`<path d="M1.500 1.500h8v9h-8z" fill="#eee" stroke="#aaa"/><path d="M4 5v5h5" fill="#bbb" stroke="#888"/>`)}
        ${icon(12, 12, svg`<path d="M2.500 4.500h7l-1 7h-5zM1 3.500h10M4.500 1.500h3" fill="#ddd" stroke="#888"/><path d="M5 5v6M7 5v6" stroke="#888"/>`)}
        <span class="sizer">${this.sizer()}</span>
      </div>
      <div class="hgrip"></div>
    </section>`;
  }

  private sizer() {
    return icon(12, 12, svg`${range(1, 5).map((r) => svg`${range(6 - r, 5).map((c) => svg`<rect x=${c * 2} y=${r * 2} width="1" height="1" fill="#777"/>`)}`)}`);
  }

  private workArea() {
    return html`<main class="center">
      <div class="tabs"><div class="tab">*Square-01.indd @ 125% [Overprint Preview]${icon(6, 6, svg`<path d="M0 0l6 6M6 0L0 6" stroke="#333" stroke-width="1.300"/>`)}</div></div>
      <div class="view">
        <div class="corner">${icon(15, 17, svg`<path d="M5.500 0v17M0 6.500h15" stroke="#000" stroke-dasharray="1 1"/><path d="M14.500 0v17M0 16.500h15" stroke="#000"/>`)}</div>
        <div class="hruler">${this.horizontalRuler()}</div>
        <div class="vruler">${this.verticalRuler()}</div>
        <div class="canvas">
          <div class="paper"></div>
          <article class="card">
            <div class="margin"></div>
            <div class="halo"></div>
            <p class="name">JOHN DOE</p>
            <p class="role">creative director</p>
            <p class="phone"><span class="s1">(5</span><span class="s2">5</span>5) 555-5555</p>
            <p class="mail">john@site.com</p>
            <p class="street">123 Street, City, State, Zip</p>
            <p class="web">www.site.com</p>
            <div class="frame"></div>
            <span class="ibeam">${icon(8, 18, svg`<path d="M1 1l3 2 3-2M4 3v12M1 17l3-2 3 2M2 12.500h4" fill="none" stroke="#c9858f"/>`)}</span>
          </article>
        </div>
        <div class="vscroll">${this.tri("up", 7, 4, "#444")}<span class="push"></span><span class="thumb"></span>${this.tri("down", 7, 4, "#555")}</div>
      </div>
      <footer class="status">
        <div class="nav"><button aria-label="First spread">${icon(8, 8, svg`<path d="M.5 0v8M7.500 0v8L2 4z" fill="#222" stroke="#222"/>`)}</button><button aria-label="Previous spread">${this.tri("left", 5, 8)}</button></div>
        ${this.pick("Page", "2", "pageno")}
        <div class="nav next"><button aria-label="Next spread">${this.tri("right", 5, 8, "#888")}</button><button aria-label="Last spread">${icon(8, 8, svg`<path d="M0 0v8l4.500-4zM6 0v8" fill="#888" stroke="#888"/>`)}</button></div>
        ${icon(14, 13, svg`<circle cx="6" cy="6" r="5.500" fill="#ccc" stroke="#777"/><path d="M3.500 3.500h4l2 2v4h-6z" fill="#fff" stroke="#555"/><path d="M10 10h4l-2 3z" fill="#222"/>`)}
        <i class="ok"></i><span class="errors">No errors</span>${this.tri("down", 6, 4, "#333")}
        <div class="hscroll">${this.tri("left", 4, 7, "#777")}</div>
        ${this.sizer()}
      </footer>
      ${this.alignPanel()}
      ${this.swatchPanel()}
      <span class="leaf">${icon(64, 72, svg`<path d="M27 10C12 14 0 26 1 42c0 7 2 11 4 14C8 38 17 22 27 10z" fill="#90ad66" opacity=".85"/><path d="M62 0C38 8 16 34 11 60c4 9 14 11 24 9C58 64 64 40 62 0z" fill="#a9c47f" opacity=".8"/><path d="M62 11C42 24 22 44 11 62c4 8 14 9 24 7C58 64 63 38 62 11z" fill="#86a75c" opacity=".75"/><path d="M33 61h6v11h-6zM41 61h6v11h-6z" fill="#777" opacity=".8"/><path d="M20 62v8l4-4z" fill="#6c8a50"/>`)}</span>
    </main>`;
  }

  private dock() {
    return html`<aside class="dock" aria-label="Panel dock">
      <div class="cap">${icon(8, 6, svg`<path d="M3.500 0L0 3l3.500 3zM7.500 0L4 3l3.500 3z" fill="#444"/>`)}</div>
      ${DOCK.map((g) => html`<div class="group"><span class="hgrip"></span>${g.map((d) => html`<button class=${classMap({ on: !!d.on })} aria-label=${d.name}>${icon(22, 22, d.art)}</button>`)}</div>`)}
    </aside>`;
  }

  render() {
    return html`<div class="app">
      ${this.menuBar()}${this.controlBar()}
      <div class="body">${this.toolBox()}${this.workArea()}${this.dock()}</div>
    </div>`;
  }
}
